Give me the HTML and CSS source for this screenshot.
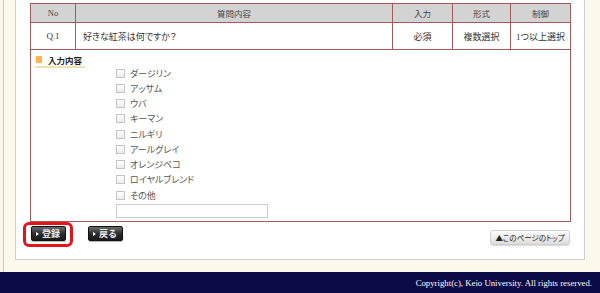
FILE: index.html
```html
<!DOCTYPE html>
<html lang="ja">
<head>
<meta charset="utf-8">
<title>アンケート</title>
<link rel="stylesheet" href="styles.css">
</head>
<body>
<div class="main">
  <div class="panel">
    <table class="qtable">
      <colgroup>
        <col class="w-no"><col class="w-q"><col class="w-in"><col class="w-fmt"><col class="w-ctl">
      </colgroup>
      <thead>
        <tr><th>No</th><th>質問内容</th><th>入力</th><th>形式</th><th>制御</th></tr>
      </thead>
      <tbody>
        <tr class="qrow">
          <td class="c">Q.1</td>
          <td class="q">好きな紅茶は何ですか？</td>
          <td class="c">必須</td>
          <td class="c">複数選択</td>
          <td class="c">1つ以上選択</td>
        </tr>
        <tr>
          <td colspan="5" class="input-cell">
            <div class="label"><span class="mark"></span>入力内容</div>
            <ul class="choices">
              <li><label><input type="checkbox">ダージリン</label></li>
              <li><label><input type="checkbox">アッサム</label></li>
              <li><label><input type="checkbox">ウバ</label></li>
              <li><label><input type="checkbox">キーマン</label></li>
              <li><label><input type="checkbox">ニルギリ</label></li>
              <li><label><input type="checkbox">アールグレイ</label></li>
              <li><label><input type="checkbox">オレンジペコ</label></li>
              <li><label><input type="checkbox">ロイヤルブレンド</label></li>
              <li><label><input type="checkbox">その他</label></li>
            </ul>
            <input type="text" class="other">
          </td>
        </tr>
      </tbody>
    </table>
    <div class="actions">
      <div class="btns">
        <span class="btn-wrap"><button class="btn">登録</button><span class="highlight"></span></span>
        <button class="btn">戻る</button>
      </div>
      <a class="totop">▲このページのトップ</a>
    </div>
  </div>
</div>
<footer class="footer">Copyright(c), Keio University. All rights reserved.</footer>
</body>
</html>
```

FILE: styles.css
```css
html, body {
  margin: 0;
  padding: 0;
}
body {
  background: #fdf8ec;
  font-family: "Liberation Serif", "Noto Sans CJK JP", serif;
  font-size: 9px;
  color: #333;
  width: 600px;
  height: 293px;
  overflow: hidden;
}
.main {
  height: 272px;
  box-sizing: border-box;
  margin-left: 3px;
  border-left: 1px solid #c9c6bf;
  padding: 0 15px 12px 11px;
  display: flex;
  flex-direction: column;
}
.panel {
  flex: 1;
  background: #fff;
  border: 1px solid #cfcdc8;
  border-top: none;
  padding: 3px 14px 0 14px;
}
.qtable {
  width: 540px;
  border-collapse: collapse;
  table-layout: fixed;
  font-feature-settings: "palt";
}
.w-no { width: 45px; }
.w-q { width: 317px; }
.w-in { width: 60px; }
.w-fmt { width: 58px; }
.w-ctl { width: 60px; }
.qtable th, .qtable td {
  border: 1px solid #a15b5b;
  padding: 0;
}
.qtable th {
  background: #d3d3d3;
  color: #444;
  font-weight: normal;
  height: 18px;
  font-size: 8.5px;
}
.qrow td {
  height: 26px;
  font-size: 9px;
  color: #333;
}
.c { text-align: center; }
.q { padding-left: 7px !important; }
.input-cell {
  padding: 4px 0 3px 4px !important;
  vertical-align: top;
}
.label {
  display: inline-flex;
  align-items: center;
  height: 11px;
  padding: 0 3px 1px 1px;
  border-bottom: 2px solid #f4dfae;
  font-weight: bold;
  font-size: 8.5px;
  color: #222;
}
.mark {
  width: 6px;
  height: 7px;
  background: #f7b54a;
  margin-right: 6px;
}
.choices {
  list-style: none;
  margin: -2.5px 0 0 81px;
  padding: 0;
}
.choices li {
  height: 15.25px;
  display: flex;
  align-items: center;
}
.choices label {
  display: flex;
  align-items: center;
  color: #555;
  font-size: 9px;
}
.choices input {
  appearance: none;
  -webkit-appearance: none;
  width: 9px;
  height: 9px;
  margin: 0 5px 0 0;
  border: 1px solid #c4c4c4;
  background: linear-gradient(#ffffff, #ececec);
  box-sizing: border-box;
}
.other {
  display: block;
  margin: 1.25px 0 0 81px;
  width: 152px;
  height: 14px;
  box-sizing: border-box;
  border: 1px solid #cbcbcb;
  padding: 0;
  background: #fff;
}
.actions {
  display: flex;
  justify-content: space-between;
  align-items: flex-start;
  margin-top: 4px;
}
.btns {
  display: flex;
  gap: 22px;
  margin-left: 1px;
}
.btn-wrap {
  position: relative;
  display: flex;
}
.btn {
  width: 35px;
  height: 15px;
  padding: 0 0 0 4px;
  border: 1px solid #111;
  border-radius: 2px;
  background: linear-gradient(#6a6a6a, #2a2a2a 55%, #1a1a1a);
  color: #e8e8e8;
  font-family: "Noto Sans CJK JP", sans-serif;
  font-size: 9px;
  font-weight: bold;
  display: flex;
  align-items: center;
  box-shadow: 0 1px 1px rgba(0,0,0,0.3);
}
.btn::before {
  content: "";
  border-left: 3px solid #fff;
  border-top: 2.5px solid transparent;
  border-bottom: 2.5px solid transparent;
  margin-right: 3px;
}
.highlight {
  position: absolute;
  left: -8px;
  top: -4px;
  width: 50px;
  height: 25px;
  box-sizing: border-box;
  border: 3px solid #e3151b;
  border-radius: 6px;
}
.totop {
  margin-top: 4px;
  width: 80px;
  height: 15px;
  box-sizing: border-box;
  border: 1px solid #d0d0d0;
  border-radius: 3px;
  background: linear-gradient(#fdfdfd, #dcdcdc);
  color: #222;
  font-family: "Noto Sans CJK JP", sans-serif;
  font-size: 7.5px;
  font-feature-settings: "palt";
  display: flex;
  align-items: center;
  justify-content: center;
  box-shadow: 0 1px 1px rgba(0,0,0,0.15);
}
.footer {
  height: 21px;
  background: #0c0b47;
  color: #fff;
  font-family: "Liberation Serif", serif;
  font-size: 8.75px;
  display: flex;
  align-items: center;
  justify-content: flex-end;
  padding-right: 8px;
}
```
